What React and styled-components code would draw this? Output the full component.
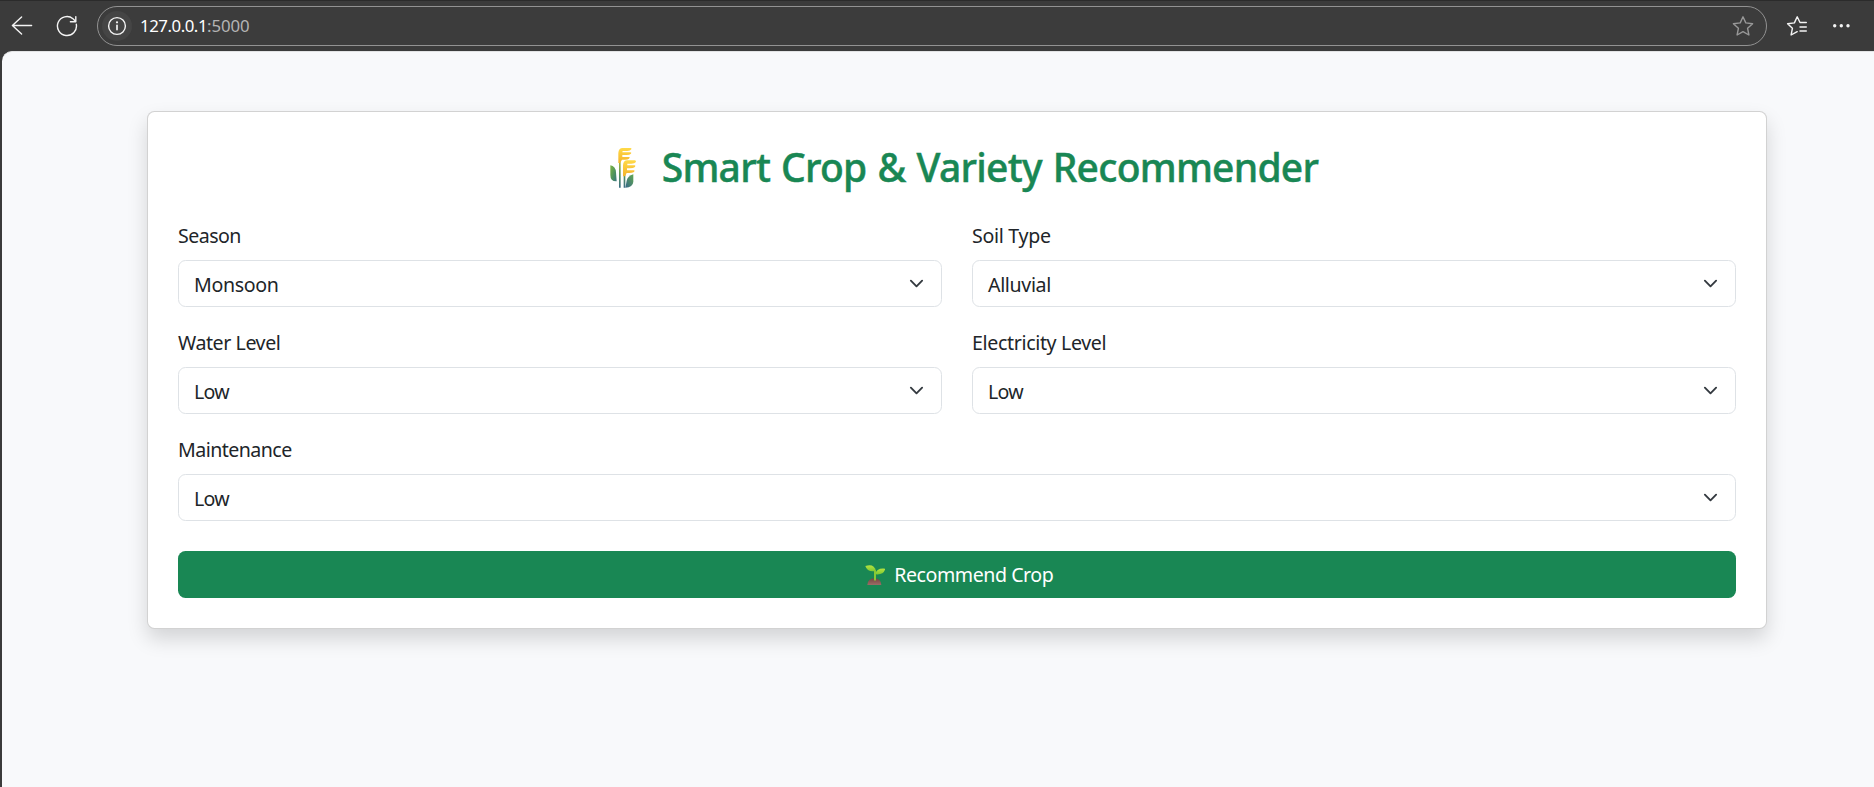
import React from 'react';
import styled, { createGlobalStyle } from 'styled-components';

const GlobalStyle = createGlobalStyle`
  *, *::before, *::after { box-sizing: border-box; }
  body {
    margin: 0;
    overflow: hidden;
    background: #3b3b3b;
    color: #212529;
    font-family: 'Noto Sans', 'Open Sans', sans-serif;
    font-size: 19.6px;
    line-height: 30px;
  }
`;

const Window = styled.div`
  display: flex;
  flex-direction: column;
  height: 787px;
`;

const Toolbar = styled.header`
  display: flex;
  flex: none;
  align-items: center;
  height: 51px;
  border-top: 1px solid #2b2b2b;
  padding: 0 0 0 11px;
  background: #3b3b3b;
  color: #f4f4f4;
`;

const ToolIcon = styled.svg`
  display: block;
  flex: none;
  width: 22px;
  height: 22px;
  margin-left: ${(p) => p.$ml || 0}px;
  color: ${(p) => p.$color || '#f4f4f4'};
  fill: none;
  stroke: currentColor;
  stroke-width: 1.4;
  stroke-linecap: round;
  stroke-linejoin: round;
`;

const AddressBar = styled.div`
  display: flex;
  flex: none;
  align-items: center;
  width: 1670px;
  height: 40px;
  margin-left: 19px;
  padding: 0 12px 0 4px;
  border: 1px solid #929292;
  border-radius: 20px;
  background: #3c3c3c;
`;

const InfoBadge = styled.span`
  display: grid;
  place-items: center;
  width: 30px;
  height: 30px;
  border-radius: 50%;
  background: #454545;
`;

const Url = styled.span`
  flex: 1;
  margin-left: 8px;
  color: #b4b4b4;
  font-size: 16.8px;
  line-height: 24px;
`;

const Host = styled.span`
  color: #ffffff;
  letter-spacing: -0.45px;
`;

const Port = styled.span`
  letter-spacing: -0.08px;
`;

const Page = styled.main`
  flex: 1;
  margin-left: 2px;
  padding: 60px 107px 0 145px;
  border-top: 1px solid #e3e4e5;
  border-top-left-radius: 10px;
  background: #f8f9fb;
`;

const Card = styled.section`
  height: 518px;
  margin-top: -1px;
  padding: 30px;
  border: 1px solid rgba(0, 0, 0, 0.176);
  border-radius: 7.5px;
  background: #fff;
  box-shadow: 0 10px 20px rgba(0, 0, 0, 0.15);
`;

const Heading = styled.h2`
  display: flex;
  align-items: center;
  justify-content: center;
  gap: 24.8px;
  height: 48px;
  margin: 0 0 30px;
  padding: 1px 0 0 14.5px;
  color: #198754;
  font-size: 39px;
  font-weight: 500;
  line-height: 48px;
  letter-spacing: -0.75px;
  word-spacing: 1.6px;
  white-space: nowrap;
  -webkit-text-stroke: 0.45px #198754;
`;

const Form = styled.form`
  display: grid;
  grid-template-columns: 1fr 1fr;
  gap: 20px 30px;
`;

const Field = styled.div`
  grid-column: ${(p) => (p.$wide ? '1 / -1' : 'auto')};
`;

const Label = styled.label`
  display: block;
  height: 40px;
  padding-top: 1px;
`;

const Tracked = styled.span`
  letter-spacing: ${(p) => p.$track}px;
`;

const Select = styled.div`
  display: flex;
  align-items: center;
  justify-content: space-between;
  height: 47px;
  padding: 2px 17.5px 0 15px;
  border: 1px solid #dee2e6;
  border-radius: 7.5px;
  background: #fff;
`;

const Chevron = styled.svg`
  display: block;
  width: 15px;
  height: 15px;
  margin: -3px 0 0;
  fill: none;
  stroke: #343a40;
  stroke-width: 2;
  stroke-linecap: round;
  stroke-linejoin: round;
`;

const Submit = styled.button`
  grid-column: 1 / -1;
  display: flex;
  align-items: center;
  justify-content: center;
  gap: 9px;
  height: 47px;
  margin: 10px 0 0;
  padding: 1px 0 0 4px;
  border: 0;
  border-radius: 7.5px;
  background: #198754;
  color: #fff;
  font: inherit;
  letter-spacing: -0.452px;
`;

const WheatSvg = styled.svg`
  display: block;
  flex: none;
  width: 26.67px;
  height: 41.33px;
  margin-top: 2px;
`;

const SproutSvg = styled.svg`
  display: block;
  flex: none;
  width: 20.67px;
  height: 20.67px;
  margin-top: 1px;
`;

const STAR = 'M11 1.8 L13.8 7.9 L20.6 8.7 L15.6 13.3 L16.9 20 L11 16.7 L5.1 20 L6.4 13.3 L1.4 8.7 L8.2 7.9 Z';

function Wheat() {
  return (
    <WheatSvg viewBox="30 36 80 124" aria-hidden="true">
      <defs>
        <linearGradient id="leaf" x1="0" y1="0" x2="1" y2="1">
          <stop offset="0" stopColor="#7cb342" />
          <stop offset="0.6" stopColor="#4c9160" />
          <stop offset="1" stopColor="#3b7480" />
        </linearGradient>
        <linearGradient id="leafRight" x1="1" y1="0" x2="0" y2="1">
          <stop offset="0" stopColor="#62a850" />
          <stop offset="1" stopColor="#35688a" />
        </linearGradient>
        <linearGradient id="stem" gradientUnits="userSpaceOnUse" x1="0" y1="80" x2="0" y2="158">
          <stop offset="0" stopColor="#a9b83f" />
          <stop offset="0.5" stopColor="#56945c" />
          <stop offset="1" stopColor="#3b6d84" />
        </linearGradient>
        <linearGradient id="grain" x1="0" y1="0" x2="0" y2="1">
          <stop offset="0" stopColor="#ffda48" />
          <stop offset="1" stopColor="#f5b32c" />
        </linearGradient>
      </defs>
      <path d="M31 91 Q47 94 48 112 L50 139 Q31 140 31 120 Z" fill="url(#leaf)" />
      <path d="M100 118 Q83 123 80 137 L76 158 Q99 157 100 140 Z" fill="url(#leafRight)" />
      <path d="M57 78 h5 v80 h-5 Z M71 115 h5 v43 h-5 Z" fill="url(#stem)" />
      <path d="M55 54 Q56 39 68 39 H91 Q96 39 94 43 Q91 48 82 48 H69 Q67 48 67 52 H91 Q96 53 93 56 Q89 60 80 60 H67 V66 H88 Q91 67 87 71 Q83 74 75 74 H66 L60 84 H55 Z" fill="url(#grain)" />
      <path d="M69 91 Q70 76 82 76 H105 Q110 77 107 82 Q104 86 94 86 H82 V91 H104 Q108 92 105 96 Q100 100 90 100 H81 V106 H102 Q106 107 102 111 Q97 114 88 114 H80 L75 124 H69 Z" fill="url(#grain)" />
    </WheatSvg>
  );
}

function Sprout() {
  return (
    <SproutSvg viewBox="0 0 62 62" aria-hidden="true">
      <defs>
        <linearGradient id="sproutLeaf" x1="0" y1="0" x2="0" y2="1">
          <stop offset="0" stopColor="#b7e33f" />
          <stop offset="1" stopColor="#7cc832" />
        </linearGradient>
        <linearGradient id="soil" x1="0" y1="0" x2="0" y2="1">
          <stop offset="0" stopColor="#774542" />
          <stop offset="1" stopColor="#9b6d66" />
        </linearGradient>
      </defs>
      <path d="M7 60 Q8 41 28 40 Q48 41 49 60 Z" fill="url(#soil)" />
      <path d="M30 44 V18" stroke="#8ac836" strokeWidth="6" strokeLinecap="round" />
      <path d="M1 3 Q27 -6 33 18 Q7 23 1 3 Z" fill="url(#sproutLeaf)" />
      <path d="M61 11 Q57 31 31 28 Q34 8 61 11 Z" fill="url(#sproutLeaf)" />
    </SproutSvg>
  );
}

const FIELDS = [
  { label: 'Season', track: -0.548, value: 'Monsoon', valueTrack: -0.355 },
  { label: 'Soil Type', track: -0.295, value: 'Alluvial', valueTrack: -0.363 },
  { label: 'Water Level', track: -0.43, value: 'Low', valueTrack: -0.7 },
  { label: 'Electricity Level', track: -0.355, value: 'Low', valueTrack: -0.7 },
  { label: 'Maintenance', track: -0.55, value: 'Low', valueTrack: -0.7, wide: true },
];

export default function App() {
  return (
    <Window>
      <GlobalStyle />
      <Toolbar>
        <ToolIcon viewBox="0 0 22 22" aria-label="Back">
          <path d="M20.6 10.5 H1.4 M10.6 1.9 L1.4 10.5 L10.6 19.1" />
        </ToolIcon>
        <ToolIcon viewBox="0 0 22 22" $ml={23} aria-label="Refresh">
          <path d="M20.3 9.3 A9.5 9.5 0 1 1 17 3.7 L19.8 6.4 M19.8 1.6 V6.8 H14.4" />
        </ToolIcon>
        <AddressBar>
          <InfoBadge>
            <ToolIcon viewBox="0 0 22 22" aria-label="Site information">
              <circle cx="11" cy="11" r="8.4" />
              <path d="M11 10.4 V14.6" strokeWidth="1.7" />
              <circle cx="11" cy="7.3" r="1.1" fill="currentColor" stroke="none" />
            </ToolIcon>
          </InfoBadge>
          <Url>
            <Host>127.0.0.1</Host>
            <Port>:5000</Port>
          </Url>
          <ToolIcon viewBox="0 0 22 22" $color="#989898">
            <path d={STAR} />
          </ToolIcon>
        </AddressBar>
        <ToolIcon viewBox="0 0 22 22" $ml={19}>
          <path d="M20.3 7.5 H14 L11.2 1.8 L8.4 7.9 L1.6 8.7 L6.4 13.3 L5.1 20 L11.2 16.7 M14 12 H20.3 M14 16 H20.3" />
        </ToolIcon>
        <ToolIcon viewBox="0 0 22 22" $ml={24}>
          <g fill="currentColor" stroke="none">
            <circle cx="2.7" cy="10.7" r="1.7" />
            <circle cx="9.3" cy="10.7" r="1.7" />
            <circle cx="16" cy="10.7" r="1.7" />
          </g>
        </ToolIcon>
      </Toolbar>
      <Page>
        <Card>
          <Heading>
            <Wheat />
            <span>Smart Crop &amp; Variety Recommender</span>
          </Heading>
          <Form>
            {FIELDS.map((f) => (
              <Field key={f.label} $wide={f.wide}>
                <Label>
                  <Tracked $track={f.track}>{f.label}</Tracked>
                </Label>
                <Select>
                  <Tracked $track={f.valueTrack}>{f.value}</Tracked>
                  <Chevron viewBox="0 0 16 16">
                    <path d="m2 5 6 6 6-6" />
                  </Chevron>
                </Select>
              </Field>
            ))}
            <Submit type="button">
              <Sprout />
              <span>Recommend Crop</span>
            </Submit>
          </Form>
        </Card>
      </Page>
    </Window>
  );
}
